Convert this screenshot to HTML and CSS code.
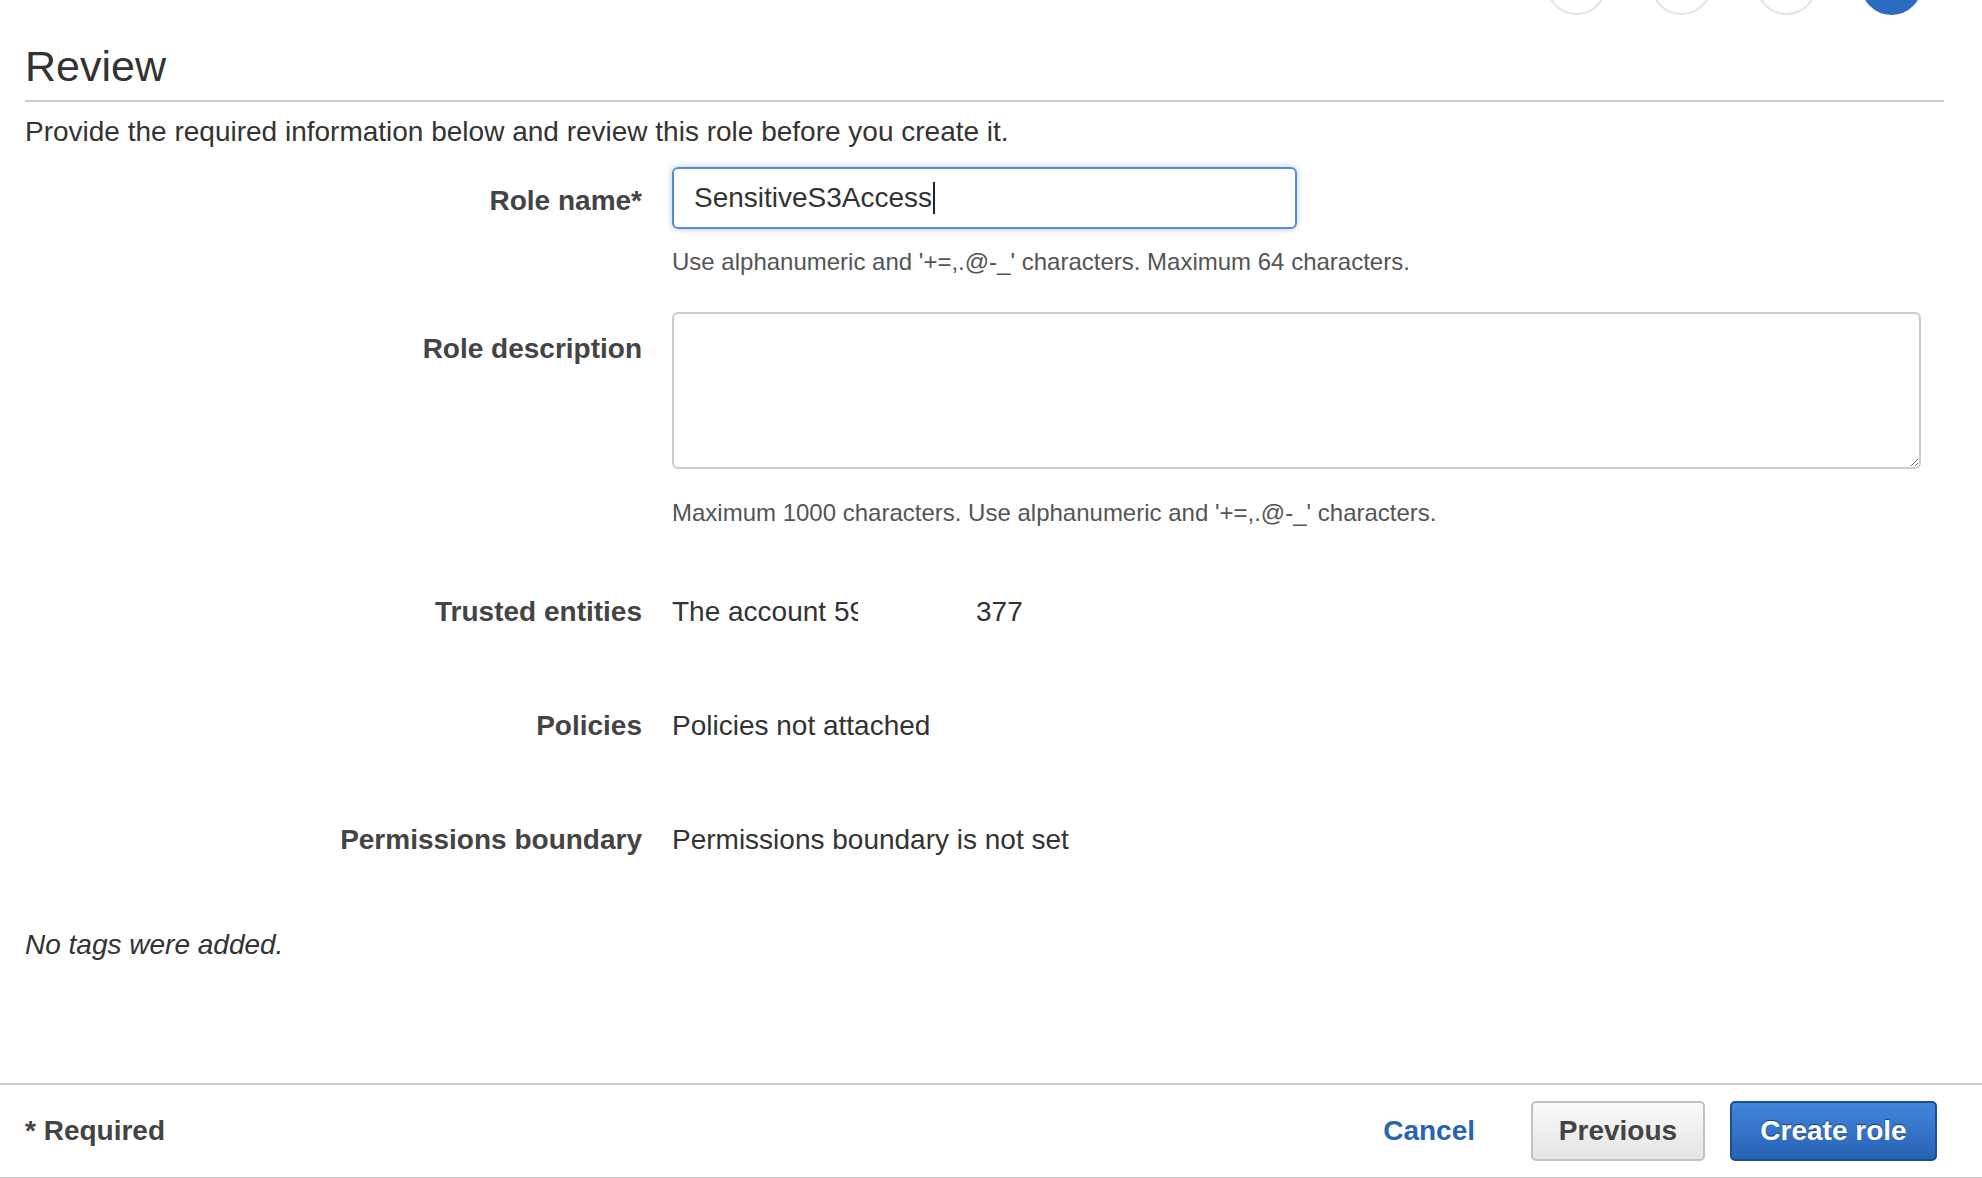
FILE: index.html
```html
<!DOCTYPE html>
<html>
<head>
<meta charset="utf-8">
<link rel="stylesheet" href="styles.css">
</head>
<body>
<div class="page">
  <div class="steps">
    <span class="step"></span>
    <span class="step"></span>
    <span class="step"></span>
    <span class="step active"></span>
  </div>
  <h1 class="title">Review</h1>
  <p class="intro">Provide the required information below and review this role before you create it.</p>

  <div class="form">
    <div class="row row-name">
      <div class="label label-input">Role name*</div>
      <div class="value">
        <div class="input"><span>SensitiveS3Access</span><span class="caret"></span></div>
        <div class="hint hint-name">Use alphanumeric and '+=,.@-_' characters. Maximum 64 characters.</div>
      </div>
    </div>

    <div class="row row-desc">
      <div class="label label-desc">Role description</div>
      <div class="value">
        <textarea class="textarea"></textarea>
        <div class="hint hint-desc">Maximum 1000 characters. Use alphanumeric and '+=,.@-_' characters.</div>
      </div>
    </div>

    <div class="row row-info row-first">
      <div class="label">Trusted entities</div>
      <div class="value"><span class="clip">The account 59</span><span class="acct-end">377</span></div>
    </div>
    <div class="row row-info">
      <div class="label">Policies</div>
      <div class="value">Policies not attached</div>
    </div>
    <div class="row row-info">
      <div class="label">Permissions boundary</div>
      <div class="value">Permissions boundary is not set</div>
    </div>
  </div>

  <p class="notags">No tags were added.</p>
</div>

<div class="footer">
  <div class="required">* Required</div>
  <div class="actions">
    <a class="cancel" href="#">Cancel</a>
    <button class="btn btn-prev">Previous</button>
    <button class="btn btn-primary">Create role</button>
  </div>
</div>
</body>
</html>
```

FILE: styles.css
```css
html, body {
  margin: 0;
  padding: 0;
  background: #ffffff;
  overflow: hidden;
}
body {
  font-family: "Liberation Sans", Arial, Helvetica, sans-serif;
  font-size: 28px;
  color: #333333;
  height: 1178px;
}
.page {
  padding: 0 38px 0 25px;
}
.steps {
  display: flex;
  justify-content: flex-end;
  gap: 44px;
  margin-top: -46px;
  padding-right: 22px;
  height: 61px;
}
.step {
  width: 61px;
  height: 61px;
  box-sizing: border-box;
  border-radius: 50%;
  border: 2px solid #e2e2e2;
  background: #ffffff;
}
.step.active {
  border-color: #2b6bc0;
  background: #2b6bc0;
}
.title {
  margin: 26px 0 0 0;
  font-size: 43px;
  font-weight: normal;
  line-height: 50px;
  color: #333333;
  padding-bottom: 9px;
  border-bottom: 2px solid #cccccc;
}
.intro {
  margin: 13px 0 0 0;
  line-height: 34px;
  color: #333333;
}
.form {
  margin-top: 18px;
}
.row {
  display: grid;
  grid-template-columns: 617px 1fr;
  column-gap: 30px;
}
.label {
  text-align: right;
  font-weight: bold;
  color: #444444;
  line-height: 34px;
}
.label-input {
  line-height: 62px;
  padding-top: 3px;
}
.label-desc {
  padding-top: 20px;
}
.value {
  line-height: 34px;
  color: #333333;
}
.input {
  width: 625px;
  height: 62px;
  box-sizing: border-box;
  border: 2px solid #5a8ad6;
  border-radius: 6px;
  box-shadow: 0 0 6px rgba(80, 130, 210, 0.45);
  padding: 0 20px;
  display: flex;
  align-items: center;
  color: #333333;
}
.caret {
  display: inline-block;
  width: 2px;
  height: 32px;
  background: #222222;
  margin-left: 1px;
}
.hint {
  font-size: 24px;
  line-height: 30px;
  color: #555555;
}
.hint-name {
  margin-top: 18px;
}
.row-desc {
  margin-top: 35px;
}
.textarea {
  display: block;
  width: 1249px;
  height: 157px;
  box-sizing: border-box;
  border: 2px solid #cccccc;
  border-radius: 6px;
  margin: 0;
  resize: vertical;
  font-family: inherit;
  font-size: 28px;
}
.hint-desc {
  margin-top: 29px;
}
.row-info {
  margin-top: 80px;
}
.row-first {
  margin-top: 67px;
}
.clip {
  display: inline-block;
  width: 186px;
  overflow: hidden;
  white-space: nowrap;
  vertical-align: top;
}
.acct-end {
  margin-left: 118px;
}
.notags {
  margin: 71px 0 0 0;
  font-style: italic;
  line-height: 34px;
  color: #333333;
}
.footer {
  position: relative;
  margin-top: 121px;
  border-top: 2px solid #cccccc;
  border-bottom: 2px solid #cccccc;
  height: 96px;
  box-sizing: border-box;
  display: flex;
  align-items: center;
  justify-content: space-between;
  padding: 0 45px 0 25px;
}
.required {
  font-weight: bold;
  color: #444444;
}
.actions {
  display: flex;
  align-items: center;
}
.cancel {
  font-weight: bold;
  color: #2a64b0;
  text-decoration: none;
  margin-right: 56px;
}
.btn {
  font-family: inherit;
  font-size: 28px;
  font-weight: bold;
  height: 60px;
  border-radius: 5px;
  box-sizing: border-box;
  margin: 0;
}
.btn-prev {
  width: 174px;
  color: #444444;
  border: 2px solid #c2c2c2;
  background: linear-gradient(#fafafa, #e4e4e4);
}
.btn-primary {
  width: 207px;
  margin-left: 25px;
  color: #ffffff;
  border: 2px solid #1d4f93;
  background: linear-gradient(#4186dc, #2862b4);
  text-shadow: 0 -1px 1px rgba(0, 0, 0, 0.5);
}
```
